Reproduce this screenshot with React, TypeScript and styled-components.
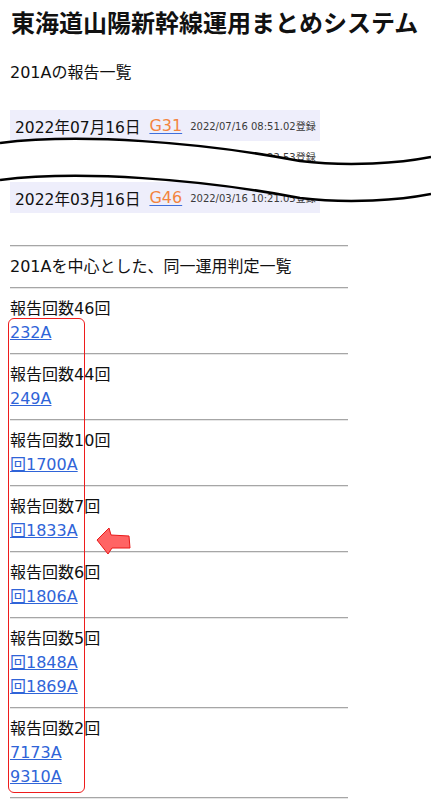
import React from "react";
import styled, { createGlobalStyle } from "styled-components";

const GlobalStyle = createGlobalStyle`
  body {
    margin: 0;
    background: #ffffff;
    color: #111111;
    font-family: "DejaVu Sans", "Noto Sans CJK JP", sans-serif;
  }
`;

const Page = styled.div`
  position: relative;
  width: 431px;
  min-height: 808px;
  padding: 0 10px;
  box-sizing: border-box;
  overflow: hidden;
`;

const Title = styled.h1`
  margin: 6px 0 0 1px;
  font-size: 24px;
  line-height: 32px;
  font-weight: bold;
  font-family: "Noto Sans CJK JP", sans-serif;
`;

const SubTitle = styled.div`
  margin-top: 23px;
  font-size: 16px;
  line-height: 24px;
`;

const ReportList = styled.div`
  margin-top: 25px;
  margin-bottom: 32px;
  display: flex;
  flex-direction: column;
`;

const ReportRow = styled.div<{ $ghost?: boolean }>`
  display: flex;
  align-items: center;
  width: 310px;
  height: 31px;
  padding-left: 5px;
  box-sizing: border-box;
  background: ${(p) => (p.$ghost ? "transparent" : "#eeeefb")};
  margin-bottom: ${(p) => (p.$ghost ? "10px" : "0")};
  white-space: nowrap;
`;

const ReportDate = styled.span`
  font-size: 15.5px;
`;

const ReportLink = styled.a`
  margin-left: 9px;
  font-size: 16px;
  color: #f3843f;
  text-decoration: underline;
  text-decoration-color: #3f6fdc;
  text-underline-offset: 2px;
`;

const ReportStamp = styled.span`
  margin-left: 8px;
  font-size: 10px;
  color: #3a3a3a;
`;

const Rule = styled.hr`
  width: 338px;
  height: 0;
  margin: 8px 0;
  border: 0;
  border-top: 1px solid #a6a6a6;
  border-bottom: 1px solid #e6e6e6;
`;

const Line = styled.div`
  font-size: 16px;
  line-height: 24px;
`;

const Group = styled.div`
  display: flex;
  flex-direction: column;
`;

const TrainLink = styled.a`
  align-self: flex-start;
  font-size: 16px;
  line-height: 24px;
  color: #2f64d8;
  text-decoration: underline;
`;

const Cut = styled.svg`
  position: absolute;
  left: 0;
  top: 130px;
  width: 431px;
  height: 80px;
`;

const Marker = styled.div`
  position: absolute;
  left: 8px;
  top: 318px;
  width: 77px;
  height: 475px;
  border: 1.5px solid #ee1c1c;
  border-radius: 6px;
  box-sizing: border-box;
`;

const Arrow = styled.svg`
  position: absolute;
  left: 95px;
  top: 527px;
  width: 38px;
  height: 28px;
`;

const reports = [
  { date: "2022年07月16日", code: "G31", stamp: "2022/07/16 08:51.02登録" },
  { date: "2022年07月16日", code: "G31", stamp: "2022/07/16 15:22.53登録", ghost: true },
  { date: "2022年03月16日", code: "G46", stamp: "2022/03/16 10:21.05登録" },
];

const groups = [
  { count: 46, trains: ["232A"] },
  { count: 44, trains: ["249A"] },
  { count: 10, trains: ["回1700A"] },
  { count: 7, trains: ["回1833A"] },
  { count: 6, trains: ["回1806A"] },
  { count: 5, trains: ["回1848A", "回1869A"] },
  { count: 2, trains: ["7173A", "9310A"] },
];

const App = () => {
  return (
    <Page>
      <GlobalStyle />
      <Title>東海道山陽新幹線運用まとめシステム</Title>
      <SubTitle>201Aの報告一覧</SubTitle>

      <ReportList>
        {reports.map((r, i) => (
          <ReportRow key={i} $ghost={r.ghost}>
            <ReportDate>{r.date}</ReportDate>
            <ReportLink href="#">{r.code}</ReportLink>
            <ReportStamp>{r.stamp}</ReportStamp>
          </ReportRow>
        ))}
      </ReportList>

      <Rule />
      <Line>201Aを中心とした、同一運用判定一覧</Line>
      <Rule />
      {groups.map((g) => (
        <React.Fragment key={g.count}>
          <Group>
            <Line>報告回数{g.count}回</Line>
            {g.trains.map((t) => (
              <TrainLink key={t} href="#">
                {t}
              </TrainLink>
            ))}
          </Group>
          <Rule />
        </React.Fragment>
      ))}

      {/* cut mark over the omitted reports */}
      <Cut viewBox="0 0 431 80">
        <path
          d="M0 13 C80 3, 200 12, 300 31 C350 37, 400 33, 431 27 L431 64 C400 70, 350 74, 300 68 C200 49, 80 40, 0 50 Z"
          fill="#ffffff"
        />
        <path
          d="M0 13 C80 3, 200 12, 300 31 C350 37, 400 33, 431 27"
          fill="none"
          stroke="#000000"
          strokeWidth="2.5"
        />
        <path
          d="M0 50 C80 40, 200 49, 300 68 C350 74, 400 70, 431 64"
          fill="none"
          stroke="#000000"
          strokeWidth="2.5"
        />
      </Cut>

      <Marker />
      <Arrow viewBox="0 0 38 28">
        <polygon
          points="2,13 14,1 16,8 34,9 35,21 17,21 13,27"
          fill="#ff6464"
          stroke="#e81818"
          strokeWidth="1"
          strokeLinejoin="round"
        />
      </Arrow>
    </Page>
  );
};

export default App;
